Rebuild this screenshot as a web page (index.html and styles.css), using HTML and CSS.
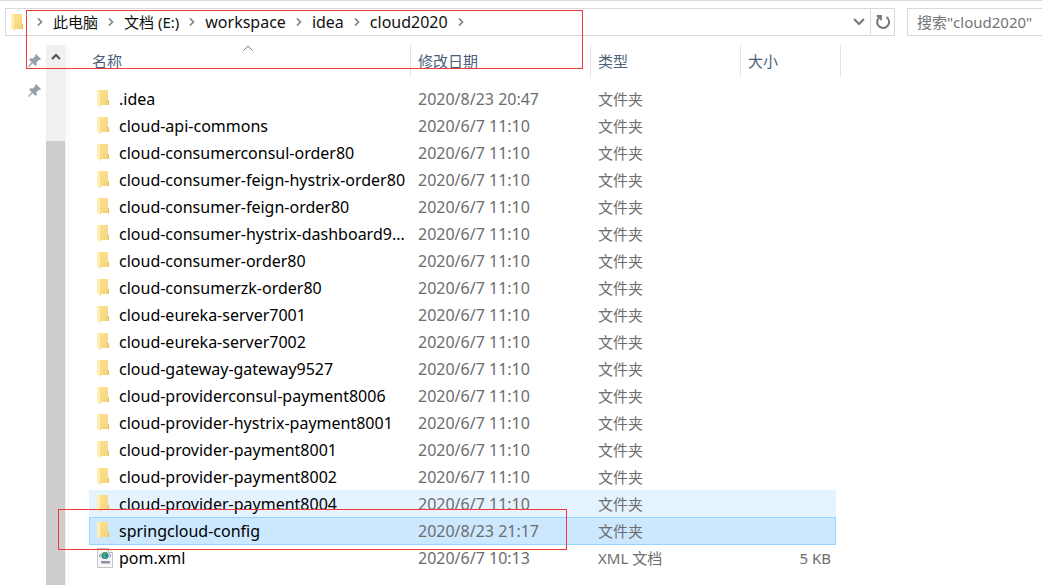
FILE: index.html
```html
<!DOCTYPE html>
<html lang="zh-CN">
<head>
    <meta charset="UTF-8">
    <title>cloud2020</title>
    <link rel="stylesheet" href="styles.css">
</head>
<body>
    <svg class="defs" width="0" height="0" aria-hidden="true">
        <linearGradient id="gold" x1="0" y1="0" x2="1" y2="1">
            <stop offset="0" stop-color="#ffe394"/>
            <stop offset="1" stop-color="#f3d27a"/>
        </linearGradient>
        <symbol id="folder" viewBox="0 0 12 17">
            <path d="M1 0h10v10h1v5H1z" fill="url(#gold)"/>
            <path d="M11 10h1v5h-1z" fill="#e9bd4f"/>
            <path d="M0 0h1l3 3v14l-4-2z" fill="#ffeeb5"/>
            <path d="M4 3v14l-1-.5V2.500z" fill="#f8dc8c"/>
        </symbol>
        <symbol id="chevron" viewBox="0 0 6 8">
            <path d="M1 .5L4.500 4L1 7.500" fill="none" stroke="#858585" stroke-width="1.7"/>
        </symbol>
        <symbol id="pin" viewBox="0 0 13 13">
            <path d="M8 0l5 5-1 1-1-.3-2.500 2.500.3 2.600-1.300 1.200-2.700-2.700L.8 13 0 12.200l3.700-4L1 5.500l1.300-1.200 2.600.3L7.300 2 7 1z" fill="#93a0a9"/>
        </symbol>
        <symbol id="xml" viewBox="0 0 16 20">
            <path d="M.5.5h11l4 4v15H.5z" fill="#f7f7f7" stroke="#c3c3c3"/>
            <path d="M11.500.5v4h4" fill="#fff" stroke="#b5b5b5"/>
            <circle cx="8" cy="7.500" r="3.600" fill="#2878ba"/>
            <path d="M6 5l3-1 1 2-2 1 1 3-2 .5-1-2z" fill="#45b649"/>
            <path d="M3.800 5.800L2 7.500l1.800 1.700M12.200 5.800L14 7.500l-1.800 1.700" fill="none" stroke="#6f7f98"/>
            <path d="M4 13h9v2H4z" fill="#8d8fa5"/>
            <path d="M4 15h9v1H4z" fill="#c4c5d0"/>
        </symbol>
    </svg>

    <header class="toolbar">
        <nav class="address">
            <svg class="folder"><use href="#folder"/></svg>
            <svg class="chevron"><use href="#chevron"/></svg>
            <a href="#">此电脑</a>
            <svg class="chevron"><use href="#chevron"/></svg>
            <a href="#">文档 (E:)</a>
            <svg class="chevron"><use href="#chevron"/></svg>
            <a href="#" class="latin">workspace</a>
            <svg class="chevron"><use href="#chevron"/></svg>
            <a href="#" class="latin">idea</a>
            <svg class="chevron"><use href="#chevron"/></svg>
            <a href="#" class="latin">cloud2020</a>
            <svg class="chevron"><use href="#chevron"/></svg>
            <button class="history" type="button" aria-label="历史">
                <svg width="12" height="8" viewBox="0 0 12 8"><path d="M1 1l5 5 5-5" fill="none" stroke="#777" stroke-width="2"/></svg>
            </button>
            <button class="refresh" type="button" aria-label="刷新">
                <svg width="16" height="16" viewBox="0 0 16 16"><path d="M5 2.800A6 6 0 1 0 11.500 3" fill="none" stroke="#777" stroke-width="2"/><path d="M1.800 2H6v4.300" fill="none" stroke="#777" stroke-width="1.800"/></svg>
            </button>
        </nav>
        <input class="search" type="text" placeholder='搜索"cloud2020"' aria-label="搜索">
    </header>

    <main class="content">
        <aside class="pins">
            <svg class="pin"><use href="#pin"/></svg>
            <svg class="pin"><use href="#pin"/></svg>
        </aside>
        <div class="scrollbar">
            <button class="scroll-up" type="button" aria-label="向上">
                <svg width="10" height="7" viewBox="0 0 10 7"><path d="M1 6l4-4 4 4" fill="none" stroke="#505050" stroke-width="2"/></svg>
            </button>
            <div class="thumb"></div>
        </div>
        <div class="list">
            <table class="files">
                <colgroup>
                    <col class="col-name">
                    <col class="col-date">
                    <col class="col-type">
                    <col class="col-size">
                    <col class="col-end">
                </colgroup>
                <thead>
                    <tr>
                        <th>名称<svg class="sort" viewBox="0 0 10 6"><path d="M.5 5.500L5 1l4.500 4.500" fill="none" stroke="#777"/></svg></th>
                        <th>修改日期</th>
                        <th>类型</th>
                        <th colspan="2">大小</th>
                    </tr>
                </thead>
                <tbody id="rows"></tbody>
            </table>
        </div>
    </main>

    <div class="mark mark-path"></div>
    <div class="mark mark-config"></div>

    <script src="script.js"></script>
</body>
</html>
```
FILE: styles.css
```css
* {
    box-sizing: border-box;
}
body {
    margin: 0;
    height: 100vh;
    overflow: hidden;
    display: flex;
    flex-direction: column;
    border-top: 1px solid #d9d9d9;
    background: white;
    color: #000;
    font: 15px/20px "Noto Sans", "Noto Sans CJK SC", sans-serif;
}
button {
    padding: 0;
    border: none;
    background: none;
    display: flex;
    align-items: center;
    justify-content: center;
}
.defs {
    position: absolute;
}
.latin {
    font-size: 16px;
}

/* address bar */
.toolbar {
    display: flex;
    gap: 12px;
    padding: 7px 0 9px 5px;
}
.address {
    flex: 1;
    height: 28px;
    display: flex;
    align-items: center;
    gap: 10px;
    padding-left: 5px;
    border: 1px solid #d9d9d9;
}
.address a {
    color: #111;
    text-decoration: none;
    white-space: nowrap;
}
.folder {
    width: 12px;
    height: 17px;
    flex: none;
}
.address .folder {
    margin-right: 4px;
}
.chevron {
    width: 6px;
    height: 8px;
    flex: none;
}
.history {
    margin-left: auto;
    width: 14px;
}
.refresh {
    width: 24px;
    height: 26px;
    margin-left: -6px;
    border-left: 1px solid #d9d9d9;
}
.search {
    width: 136px;
    height: 28px;
    margin-right: -1px;
    padding: 0 0 0 9px;
    border: 1px solid #d9d9d9;
    font: inherit;
}
.search::placeholder {
    color: #757575;
    opacity: 1;
}

/* left pane */
.content {
    flex: 1;
    min-height: 0;
    display: flex;
}
.pins {
    width: 46px;
    display: flex;
    flex-direction: column;
    align-items: flex-end;
    gap: 17px;
    padding: 9px 5px 0 0;
}
.pin {
    width: 13px;
    height: 13px;
}
.scrollbar {
    width: 20px;
    display: flex;
    flex-direction: column;
    background: #f0f0f0;
}
.scroll-up {
    height: 22px;
}
.thumb {
    flex: 1;
    margin: 74px 1px 0 0;
    background: #cdcdcd;
}

/* file list */
.list {
    flex: 1;
    margin-left: 2px;
    padding-left: 20px;
    border-left: 1px solid #f5f5f5;
}
.files {
    width: 752px;
    table-layout: fixed;
    border-collapse: separate;
    border-spacing: 0;
}
.col-name {
    width: 322px;
}
.col-date {
    width: 180px;
}
.col-type {
    width: 150px;
}
.col-size {
    width: 95px;
}
.col-end {
    width: 5px;
}
.files th {
    position: relative;
    height: 32px;
    padding: 0 0 0 7px;
    border-right: 1px solid #e2e2e2;
    text-align: left;
    font-weight: normal;
    color: #4c607a;
}
.files th:first-child {
    padding-left: 3px;
}
.sort {
    position: absolute;
    top: 0;
    left: 48%;
    width: 10px;
    height: 6px;
}
.files tbody::before {
    content: "";
    display: block;
    height: 8px;
}
.files td {
    height: 27px;
    padding: 0 0 0 7px;
    color: #6d6d6d;
    white-space: nowrap;
}
.files td:first-child {
    padding-left: 8px;
    color: #000;
}
.files td:nth-child(2) {
    font-size: 16px;
}
.files td:nth-child(4) {
    padding-right: 5px;
    text-align: right;
}
.name {
    display: flex;
    align-items: center;
    gap: 10px;
    font-size: 16px;
}
.xml {
    width: 16px;
    height: 20px;
    margin-right: -4px;
}
.hover td {
    background: #e5f3ff;
}
.selected td {
    background: #cce8ff;
    box-shadow: inset 0 1px #99d1ff, 0 1px #99d1ff;
}
.selected td:first-child {
    box-shadow: inset 1px 1px #99d1ff, 0 1px #99d1ff;
}
.selected td:last-child {
    box-shadow: inset -1px 1px #99d1ff, 0 1px #99d1ff;
}

/* red marker boxes over the window */
.mark {
    position: absolute;
    border: 1px solid #f03a3a;
    pointer-events: none;
}
.mark-path {
    left: 26px;
    top: 10px;
    width: 557px;
    height: 59px;
}
.mark-config {
    left: 58px;
    top: 509px;
    width: 509px;
    height: 41px;
}
```
FILE: script.js
```js
const files = [
    ['.idea', '2020/8/23 20:47'],
    ['cloud-api-commons', '2020/6/7 11:10'],
    ['cloud-consumerconsul-order80', '2020/6/7 11:10'],
    ['cloud-consumer-feign-hystrix-order80', '2020/6/7 11:10'],
    ['cloud-consumer-feign-order80', '2020/6/7 11:10'],
    ['cloud-consumer-hystrix-dashboard9...', '2020/6/7 11:10'],
    ['cloud-consumer-order80', '2020/6/7 11:10'],
    ['cloud-consumerzk-order80', '2020/6/7 11:10'],
    ['cloud-eureka-server7001', '2020/6/7 11:10'],
    ['cloud-eureka-server7002', '2020/6/7 11:10'],
    ['cloud-gateway-gateway9527', '2020/6/7 11:10'],
    ['cloud-providerconsul-payment8006', '2020/6/7 11:10'],
    ['cloud-provider-hystrix-payment8001', '2020/6/7 11:10'],
    ['cloud-provider-payment8001', '2020/6/7 11:10'],
    ['cloud-provider-payment8002', '2020/6/7 11:10'],
    ['cloud-provider-payment8004', '2020/6/7 11:10', 'hover'],
    ['springcloud-config', '2020/8/23 21:17', 'selected'],
    ['pom.xml', '2020/6/7 10:13']
];

document.getElementById('rows').innerHTML = files.map(([name, date, state]) => {
    const icon = name === 'pom.xml' ? 'xml' : 'folder';
    return `<tr class="${state || ''}">
        <td><div class="name"><svg class="${icon}"><use href="#${icon}"/></svg><span>${name}</span></div></td>
        <td>${date}</td>
        <td>${icon === 'xml' ? 'XML 文档' : '文件夹'}</td>
        <td>${icon === 'xml' ? '5 KB' : ''}</td>
    </tr>`;
}).join('');
```
